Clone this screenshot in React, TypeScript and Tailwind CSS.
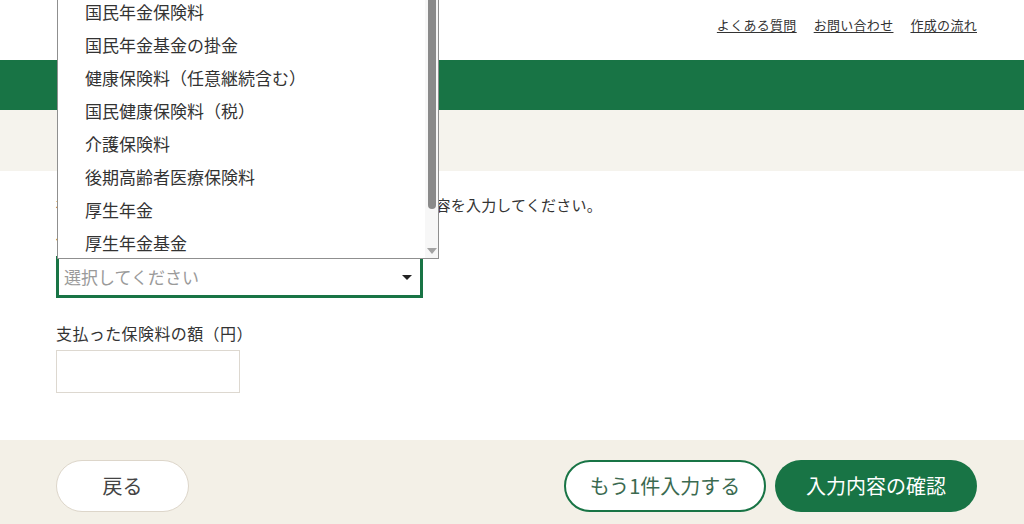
import React from 'react';

const font = "font-['Noto_Sans_CJK_JP','Noto_Sans',sans-serif]";

const options = [
    '国民年金保険料',
    '国民年金基金の掛金',
    '健康保険料（任意継続含む）',
    '国民健康保険料（税）',
    '介護保険料',
    '後期高齢者医療保険料',
    '厚生年金',
    '厚生年金基金',
];

const OptionList: React.FC = () => (
    <div className="absolute left-[57px] top-0 w-[382px] h-[259px] bg-white border-l border-b border-r border-[#8f8f8f] overflow-hidden flex">
        <ul className="flex-1 -mt-[5px]">
            {options.map(opt => (
                <li key={opt} className="h-[33px] flex items-center pl-[27px] text-[17px] text-[#333]">
                    {opt}
                </li>
            ))}
        </ul>
        {/* Scrollbar */}
        <div className="w-[13px] bg-[#f7f7f7] flex flex-col items-center">
            <div className="w-[8px] h-[209px] bg-[#8a8a8a] rounded-b-full" />
            <div className="flex-1" />
            <div className="w-0 h-0 border-l-[5px] border-r-[5px] border-t-[6px] border-l-transparent border-r-transparent border-t-[#a3a3a3] mb-[4px]" />
        </div>
    </div>
);

export default function App() {
    return (
        <div className={`relative w-[1024px] h-[524px] overflow-hidden bg-white ${font}`}>
            {/* Top links */}
            <header className="h-[60px] flex items-center justify-end pr-[47px] gap-[17px] text-[13px] text-[#333] pb-[10px] tracking-[0.3px]">
                <a className="underline underline-offset-2">よくある質問</a>
                <a className="underline underline-offset-2">お問い合わせ</a>
                <a className="underline underline-offset-2">作成の流れ</a>
            </header>

            {/* Green band */}
            <div className="h-[50px] bg-[#187445]" />

            {/* Beige band */}
            <div className="h-[61px] bg-[#f5f3ed]" />

            {/* Form */}
            <main className="h-[269px] px-[56px] pt-[23px]">
                <p className="text-[15px] text-[#333] leading-[22px] whitespace-nowrap tracking-[0.2px]">
                    社会保険料控除の対象となる保険料の種類を選択し、内容を入力してください。
                </p>
                <p className="mt-[14px] text-[15px] text-[#333] leading-[20px]">保険料の種類</p>
                <div className="mt-[6px] w-[367px] h-[42px] border-[3px] border-[#187445] flex items-center justify-between pl-[5px] pr-[8px]">
                    <span className="text-[17px] text-[#9a9a9a]">選択してください</span>
                    <span className="w-0 h-0 border-l-[5px] border-r-[5px] border-t-[5px] border-l-transparent border-r-transparent border-t-[#222]" />
                </div>
                <p className="mt-[23px] text-[16px] text-[#333] leading-[24px] tracking-[0.4px]">支払った保険料の額（円）</p>
                <div className="mt-[5px] w-[184px] h-[43px] border border-[#ddd8d0] bg-white" />
            </main>

            {/* Footer buttons */}
            <footer className="h-[84px] bg-[#f3f0e7] flex items-start justify-between pr-[47px] pl-[56px] pt-[20px]">
                <button className="w-[133px] h-[52px] rounded-full bg-white border border-[#ddd6ca] text-[20px] text-[#444]">
                    戻る
                </button>
                <div className="flex gap-[9px]">
                    <button className="w-[202px] h-[52px] rounded-full bg-white border-2 border-[#187445] text-[20px] text-[#3b6a50]">
                        もう1件入力する
                    </button>
                    <button className="w-[202px] h-[52px] rounded-full bg-[#187445] text-[20px] text-white">
                        入力内容の確認
                    </button>
                </div>
            </footer>

            <OptionList />
        </div>
    );
}
